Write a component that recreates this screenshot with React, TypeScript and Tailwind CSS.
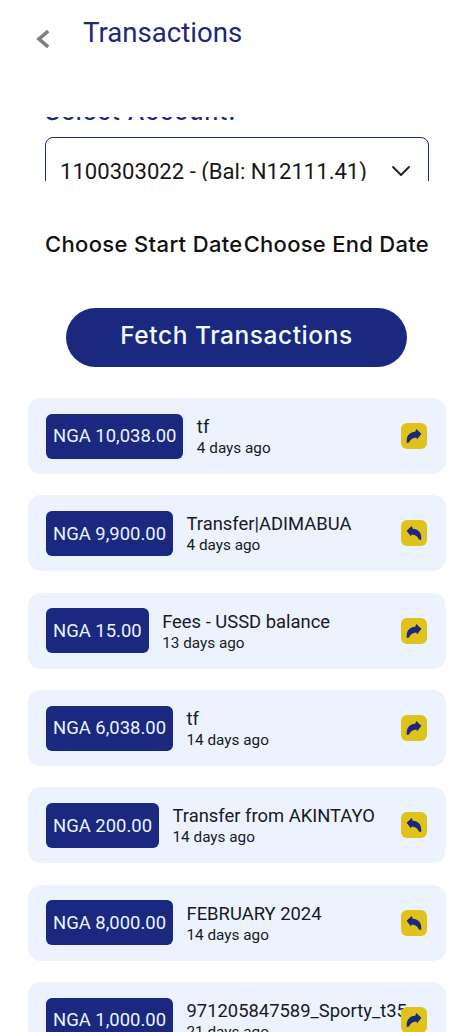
import { useState } from "react";
import { ChevronDown } from "lucide-react";

type Transaction = {
  id: number;
  amount: string;
  title: string;
  time: string;
  type: "debit" | "credit";
};

const TRANSACTIONS: Transaction[] = [
  { id: 1, amount: "10,038.00", title: "tf", time: "4 days ago", type: "debit" },
  { id: 2, amount: "9,900.00", title: "Transfer|ADIMABUA", time: "4 days ago", type: "credit" },
  { id: 3, amount: "15.00", title: "Fees - USSD balance", time: "13 days ago", type: "debit" },
  { id: 4, amount: "6,038.00", title: "tf", time: "14 days ago", type: "debit" },
  { id: 5, amount: "200.00", title: "Transfer from AKINTAYO", time: "14 days ago", type: "credit" },
  { id: 6, amount: "8,000.00", title: "FEBRUARY 2024", time: "14 days ago", type: "credit" },
  { id: 7, amount: "1,000.00", title: "971205847589_Sporty_t35", time: "21 days ago", type: "debit" },
];

function ArrowIcon({ flipped }: { flipped: boolean }) {
  return (
    <svg
      viewBox="0 0 27 27"
      fill="currentColor"
      className={flipped ? "h-[26px] w-[26px] -scale-x-100" : "h-[26px] w-[26px]"}
    >
      <path d="M6 20.8C5.2 14 8.4 9.4 14.8 9.2L15.8 6.2 21.2 11.2 16.8 16.9 15.8 15C12 15.4 9.6 17 8.4 20.2Z" />
    </svg>
  );
}

function TransactionCard({ item }: { item: Transaction }) {
  return (
    <li className="flex h-[76px] items-center rounded-[13px] bg-[#ecf3fe] pr-[19px] pl-[18px]">
      <div className="flex h-[45px] shrink-0 items-center rounded-[6px] bg-[#1a287f] px-[7px] pt-[2px] text-[18.45px] whitespace-nowrap text-[#edf3ff]">
        NGA {item.amount}
      </div>
      <div className="ml-[13.5px] w-0 flex-1 pt-[2px] whitespace-nowrap text-[#171a22]">
        <div className="text-[18.4px] leading-[22px]">{item.title}</div>
        <div className="text-[15.3px] leading-[20px]">{item.time}</div>
      </div>
      <div className="relative h-[26px] w-[26px] shrink-0 rounded-[6px] bg-[#dfc31b] text-[#1a287f]">
        <ArrowIcon flipped={item.type === "credit"} />
      </div>
    </li>
  );
}

export default function App() {
  const [transactions] = useState(TRANSACTIONS);

  return (
    <main className="h-[1032px] w-[474px] overflow-hidden bg-white font-['Roboto',sans-serif]">
      {/* Header */}
      <header className="flex h-[117px] items-start pl-[35px]">
        <button type="button" aria-label="Back" className="mt-[30px] text-[#808080]">
          <svg width="14" height="18" viewBox="0 0 14 18" fill="none" stroke="currentColor" strokeWidth="3.6">
            <path d="M13.2 1 4 9l9.2 8" />
          </svg>
        </button>
        <h1 className="mt-[16px] ml-[34px] text-[27.6px] leading-[34px] text-[#1a287f]">Transactions</h1>
      </header>

      {/* Account picker, partly scrolled */}
      <section className="h-[64px] overflow-hidden px-[45px]">
        <div className="-mt-[20px] h-[40px] font-['Inter',sans-serif] text-[23.5px] leading-[30px] font-medium tracking-[0.9px] text-[#1a287f]">
          Select Account:
        </div>
        <div className="flex h-[67px] items-center justify-between rounded-[8px] border border-[#1a287f] pr-[11px] pl-[14px]">
          <span className="pt-[2px] text-[22.1px] text-[#171717]">1100303022 - (Bal: N12111.41)</span>
          <ChevronDown size={32} strokeWidth={1.4} className="text-[#222]" />
        </div>
      </section>

      {/* Date range */}
      <div className="mt-[48px] flex h-[30px] items-center justify-between px-[45px] font-['Inter',sans-serif] text-[22px] font-medium whitespace-nowrap text-[#111]">
        <span className="tracking-[0.35px]">Choose Start Date</span>
        <span className="tracking-[0.28px]">Choose End Date</span>
      </div>

      <button
        type="button"
        className="mt-[49px] ml-[66px] flex h-[59px] w-[341px] items-center justify-center rounded-full bg-[#1a287f] pb-[4px] font-['Inter',sans-serif] text-[24.5px] font-medium tracking-[0.55px] text-[#f4faff]"
      >
        Fetch Transactions
      </button>

      <ul className="mx-[28px] mt-[31px] space-y-[21.35px]">
        {transactions.map((item) => (
          <TransactionCard key={item.id} item={item} />
        ))}
      </ul>
    </main>
  );
}
